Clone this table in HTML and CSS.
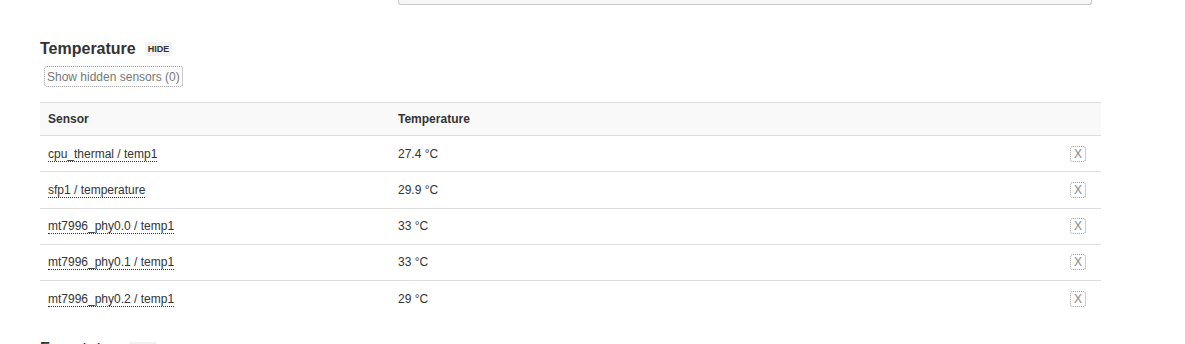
FILE: index.html
```html
<!DOCTYPE html>
<html>
<head>
<meta charset="utf-8">
<link rel="stylesheet" href="styles.css">
</head>
<body>
<div class="topbox"></div>
<div class="section">
  <h3 class="sec-title"><span>Temperature</span><span class="badge">HIDE</span></h3>
  <button class="show-btn">Show hidden sensors (0)</button>
  <table class="sensors">
    <thead>
      <tr><th class="c1">Sensor</th><th class="c2">Temperature</th><th class="c3"></th></tr>
    </thead>
    <tbody>
      <tr><td><span class="name">cpu_thermal / temp1</span></td><td>27.4 °C</td><td class="c3"><span class="xbtn">X</span></td></tr>
      <tr><td><span class="name">sfp1 / temperature</span></td><td>29.9 °C</td><td class="c3"><span class="xbtn">X</span></td></tr>
      <tr><td><span class="name">mt7996_phy0.0 / temp1</span></td><td>33 °C</td><td class="c3"><span class="xbtn">X</span></td></tr>
      <tr><td><span class="name">mt7996_phy0.1 / temp1</span></td><td>33 °C</td><td class="c3"><span class="xbtn">X</span></td></tr>
      <tr><td><span class="name">mt7996_phy0.2 / temp1</span></td><td>29 °C</td><td class="c3"><span class="xbtn">X</span></td></tr>
    </tbody>
  </table>
</div>
<div class="section next">
  <h3 class="sec-title"><span>Fan&nbsp;status</span><span class="badge">HIDE</span></h3>
</div>
</body>
</html>
```
FILE: styles.css
```css
html, body {
  margin: 0;
  padding: 0;
  background: #fff;
  font-family: "Liberation Sans", Arial, sans-serif;
  color: #333;
  font-size: 12px;
}
body {
  padding-left: 40px;
  padding-right: 84px;
}
.topbox {
  margin-left: 358px;
  width: 692px;
  height: 30px;
  margin-top: -26px;
  border: 1px solid #c8c8c8;
  border-top: none;
  border-radius: 0 0 3px 3px;
  background: #f7f7f7;
}
.sec-title {
  margin: 34px 0 0 0;
  font-size: 16px;
  line-height: 20px;
  font-weight: bold;
  color: #333;
  display: flex;
  align-items: center;
  gap: 9px;
}
.badge {
  font-size: 9px;
  line-height: 14px;
  padding: 0 3px;
  background: #f2f2f2;
  border-radius: 2px;
  color: #333;
  font-weight: bold;
}
.show-btn {
  display: block;
  margin: 7px 0 0 4px;
  height: 21px;
  padding: 0 2px;
  font-family: "Liberation Sans", Arial, sans-serif;
  font-size: 12px;
  color: #777;
  background: #fff;
  border: 1px dotted #999;
  border-radius: 3px;
}
.sensors {
  margin-top: 15px;
  width: 1061px;
  border-collapse: collapse;
}
.sensors th, .sensors td {
  text-align: left;
  padding: 0 8px;
  border-top: 1px solid #ddd;
  font-size: 12px;
}
.sensors th {
  height: 32px;
  background: #f9f9f9;
  font-weight: bold;
  color: #333;
}
.sensors td {
  height: 35.25px;
}
.sensors .c1 { width: 334px; }
.sensors td:first-child { width: 334px; }
.sensors .c3 {
  text-align: right;
  padding-right: 15px;
}
.name {
  border-bottom: 1px dotted #333;
}
.xbtn {
  display: inline-block;
  width: 14px;
  height: 14px;
  line-height: 14px;
  text-align: center;
  border: 1px dotted #999;
  border-radius: 3px;
  color: #888;
  font-size: 12px;
  vertical-align: middle;
}
.next .sec-title {
  margin-top: 23px;
}
```
